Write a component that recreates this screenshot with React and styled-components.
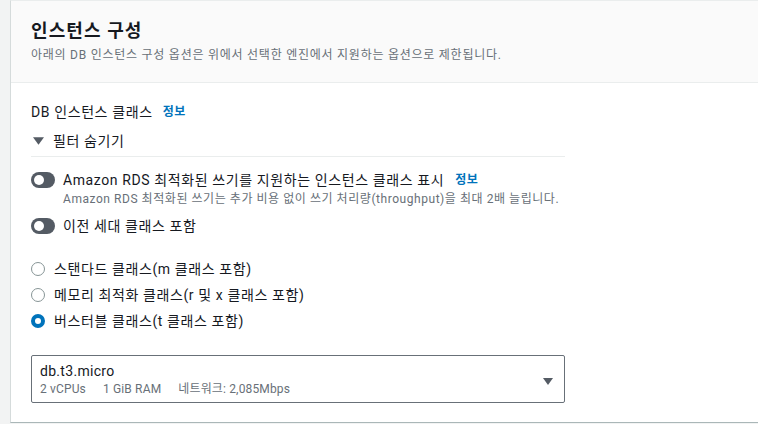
import React from "react";
import styled, { createGlobalStyle } from "styled-components";

const Global = createGlobalStyle`
  html, body { margin: 0; padding: 0; background: #f2f3f3; }
  body {
    font-family: "Roboto", "Noto Sans CJK KR", sans-serif;
    color: #16191f;
    -webkit-font-smoothing: antialiased;
  }
  * { box-sizing: border-box; }
`;

const Page = styled.div`
  display: flex;
  padding: 0 0 0 10px;
  height: 424px;
  overflow: hidden;
`;

const Panel = styled.section`
  flex: 1;
  height: 423px;
  margin-right: -2px;
  background: #fff;
  border: 1px solid #d5dbdb;
  border-top-color: #eaeded;
  border-bottom-color: #aab7b8;
  display: flex;
  flex-direction: column;
`;

const Header = styled.header`
  background: #fafafa;
  border-bottom: 1px solid #eaeded;
  padding: 19px 20px 19px;
  display: flex;
  flex-direction: column;
  gap: 5px;
`;

const Title = styled.h2`
  margin: 0;
  font-size: 18px;
  line-height: 22px;
  font-weight: 700;
  letter-spacing: 1.1px;
  color: #16191f;
`;

const Desc = styled.p`
  margin: 0;
  font-size: 12px;
  line-height: 16px;
  letter-spacing: 0.75px;
  color: #687078;
`;

const Body = styled.div`
  padding: 18px 20px 0;
  display: flex;
  flex-direction: column;
`;

const Column = styled.div`
  width: 534px;
  display: flex;
  flex-direction: column;
  letter-spacing: 0.6px;
`;

const FieldLabel = styled.div`
  font-size: 14px;
  line-height: 22px;
  display: flex;
  align-items: center;
  gap: 10px;
`;

const Info = styled.a`
  font-size: 12px;
  font-weight: 700;
  letter-spacing: 0.5px;
  color: #0073bb;
  text-decoration: none;
`;

const FilterToggle = styled.div`
  margin-top: 7px;
  padding: 0 0 4px 2px;
  border-bottom: 1px solid #eaeded;
  display: flex;
  align-items: center;
  gap: 9px;
  font-size: 14px;
  line-height: 22px;
  color: #16191f;
`;

const Caret = styled.svg`
  width: ${(p) => p.$w || 11}px;
  height: ${(p) => p.$h || 8}px;
  flex: none;
`;

const ToggleRow = styled.div`
  display: flex;
  align-items: flex-start;
  gap: 8px;
  margin-top: ${(p) => p.$mt}px;
`;

const Switch = styled.span`
  position: relative;
  flex: none;
  width: 24px;
  height: 16px;
  margin-top: 3px;
  border-radius: 8px;
  background: #545b64;
  &::after {
    content: "";
    position: absolute;
    left: 3px;
    top: 3px;
    width: 10px;
    height: 10px;
    border-radius: 50%;
    background: #fff;
  }
`;

const ToggleText = styled.div`
  display: flex;
  flex-direction: column;
`;

const ToggleLabel = styled.div`
  font-size: 14px;
  line-height: 22px;
  display: flex;
  align-items: center;
  gap: 11px;
`;

const ToggleDesc = styled.div`
  font-size: 12px;
  line-height: 16px;
  letter-spacing: 0.55px;
  color: #687078;
`;

const RadioGroup = styled.div`
  margin-top: 21px;
  display: flex;
  flex-direction: column;
  gap: 4px;
`;

const RadioRow = styled.label`
  display: flex;
  align-items: center;
  gap: 9px;
  font-size: 14px;
  line-height: 22px;
  height: 22px;
`;

const RadioDot = styled.span`
  flex: none;
  width: 14px;
  height: 14px;
  border-radius: 50%;
  background: #fff;
  border: ${(p) => (p.$checked ? "4px solid #0073bb" : "1px solid #879596")};
`;

const Select = styled.div`
  margin-top: 23px;
  height: 48px;
  border: 1px solid #687078;
  border-radius: 2px;
  padding: 4px 11px 0 8px;
  display: flex;
  align-items: center;
  justify-content: space-between;
`;

const SelectText = styled.div`
  display: flex;
  flex-direction: column;
  margin-top: -5px;
`;

const SelectValue = styled.div`
  font-size: 14px;
  line-height: 20px;
  letter-spacing: 0.3px;
`;

const SelectMeta = styled.div`
  display: flex;
  gap: 17px;
  font-size: 12px;
  line-height: 16px;
  letter-spacing: 0.15px;
  color: #687078;
`;

const Triangle = ({ w, h, color }) => (
  <Caret $w={w} $h={h} viewBox="0 0 10 7">
    <polygon points="0,0 10,0 5,7" fill={color} />
  </Caret>
);

export default function App() {
  return (
    <>
      <Global />
      <Page>
        <Panel>
          <Header>
            <Title>인스턴스 구성</Title>
            <Desc>아래의 DB 인스턴스 구성 옵션은 위에서 선택한 엔진에서 지원하는 옵션으로 제한됩니다.</Desc>
          </Header>
          <Body>
            <Column>
              <FieldLabel>
                DB 인스턴스 클래스 <Info href="#">정보</Info>
              </FieldLabel>
              <FilterToggle>
                <Triangle w={11} h={8} color="#545b64" />
                필터 숨기기
              </FilterToggle>
              <ToggleRow $mt={12}>
                <Switch />
                <ToggleText>
                  <ToggleLabel>
                    Amazon RDS 최적화된 쓰기를 지원하는 인스턴스 클래스 표시
                    <Info href="#">정보</Info>
                  </ToggleLabel>
                  <ToggleDesc>
                    Amazon RDS 최적화된 쓰기는 추가 비용 없이 쓰기 처리량(throughput)을 최대 2배 늘립니다.
                  </ToggleDesc>
                </ToggleText>
              </ToggleRow>
              <ToggleRow $mt={8}>
                <Switch />
                <ToggleLabel>이전 세대 클래스 포함</ToggleLabel>
              </ToggleRow>
              <RadioGroup>
                <RadioRow>
                  <RadioDot />
                  스탠다드 클래스(m 클래스 포함)
                </RadioRow>
                <RadioRow>
                  <RadioDot />
                  메모리 최적화 클래스(r 및 x 클래스 포함)
                </RadioRow>
                <RadioRow>
                  <RadioDot $checked />
                  버스터블 클래스(t 클래스 포함)
                </RadioRow>
              </RadioGroup>
              <Select>
                <SelectText>
                  <SelectValue>db.t3.micro</SelectValue>
                  <SelectMeta>
                    <span>2 vCPUs</span>
                    <span>1 GiB RAM</span>
                    <span>네트워크: 2,085Mbps</span>
                  </SelectMeta>
                </SelectText>
                <Triangle w={10} h={7} color="#545b64" />
              </Select>
            </Column>
          </Body>
        </Panel>
      </Page>
    </>
  );
}
